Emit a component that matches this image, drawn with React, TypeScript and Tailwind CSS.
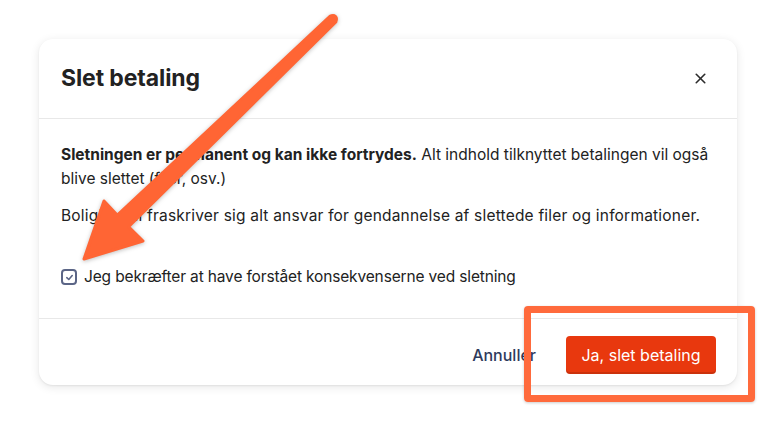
import { X } from 'lucide-react'

function Arrow() {
  // annotation arrow pointing at the checkbox
  return (
    <svg
      className="pointer-events-none absolute left-0 top-0"
      width={776}
      height={424}
      viewBox="0 0 776 424"
      style={{ filter: 'drop-shadow(0 1px 2px rgba(0,0,0,0.25))' }}
    >
      <polygon
        points="335.8,21.9 128.6,226.8 143,241 84,259 104,201 117.4,215.2 330.2,16.1"
        fill="#ff6534"
        stroke="#ff6534"
        strokeWidth={3}
        strokeLinejoin="round"
      />
      <circle cx={333} cy={19} r={5} fill="#ff6534" />
    </svg>
  )
}

export default function App() {
  return (
    <div className="relative h-[424px] w-full overflow-hidden bg-white pl-[39px] pt-[39px] font-['Inter',sans-serif] text-[#222]">
      <div className="w-[698px] rounded-[14px] bg-white shadow-[0_2px_10px_rgba(0,0,0,0.10),0_1px_2px_rgba(0,0,0,0.06)]">
        {/* Header */}
        <div className="flex h-[80px] items-center justify-between border-b border-[#e8e8e8] pl-[22px] pr-[25px]">
          <h2 className="text-[23px] font-bold tracking-[-0.1px] text-[#222]">Slet betaling</h2>
          <button className="flex h-[24px] w-[24px] items-center justify-center text-[#2b2b2b]">
            <X size={17} strokeWidth={2.3} />
          </button>
        </div>

        {/* Body */}
        <div className="h-[200px] border-b border-[#e8e8e8] px-[22px] pt-[24px] text-[15.5px] leading-[24px]">
          <p>
            <span className="font-bold">Sletningen er permanent og kan ikke fortrydes.</span> Alt indhold tilknyttet
            betalingen vil også blive slettet (filer, osv.)
          </p>
          <p className="mt-[13px] tracking-[0.2px]">
            BoligPortal fraskriver sig alt ansvar for gendannelse af slettede filer og informationer.
          </p>
          <label className="mt-[37px] flex items-center gap-[7px]">
            <span className="flex h-[16px] w-[16px] items-center justify-center rounded-[4px] border-2 border-[#5b6586]">
              <svg width="9" height="9" viewBox="0 0 10 10" fill="none">
                <path d="M2 5.2 L4.2 7.2 L8 2.8" stroke="#5b6586" strokeWidth="1.8" strokeLinecap="round" strokeLinejoin="round" />
              </svg>
            </span>
            <span className="tracking-[-0.15px]">Jeg bekræfter at have forstået konsekvenserne ved sletning</span>
          </label>
        </div>

        {/* Footer */}
        <div className="flex h-[66px] items-start justify-end gap-[30px] pr-[21px] pt-[17px]">
          <button className="h-[38px] text-[16px] font-medium text-[#2e3a5c]">Annuller</button>
          <button className="h-[38px] w-[150px] rounded-[4px] bg-[#e8380e] text-[16px] font-normal text-white shadow-[inset_0_-2px_0_rgba(0,0,0,0.12)]">
            Ja, slet betaling
          </button>
        </div>
      </div>

      {/* Annotations */}
      <div className="pointer-events-none absolute left-[524px] top-[306px] h-[96px] w-[231px] rounded-[4px] border-[7px] border-[#ff6a3c] shadow-[0_1px_3px_rgba(0,0,0,0.2)]" />
      <Arrow />
    </div>
  )
}
